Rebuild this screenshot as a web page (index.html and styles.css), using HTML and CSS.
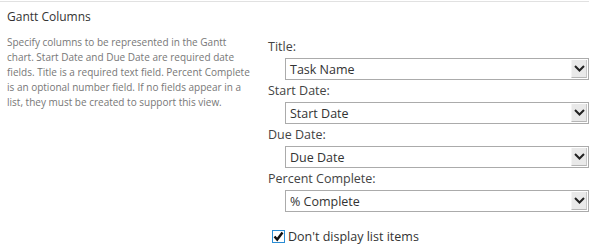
FILE: index.html
```html
<!DOCTYPE html>
<html lang="en">
<head>
    <meta charset="UTF-8">
    <title>Gantt Columns</title>
    <link rel="stylesheet" href="styles.css">
</head>
<body>
    <!-- Gantt columns section -->
    <div class="section">
        <div class="info">
            <h3 class="section-title">Gantt Columns</h3>
            <p class="section-desc">Specify columns to be represented in the Gantt chart. Start Date and Due Date are required date fields. Title is a required text field. Percent Complete is an optional number field. If no fields appear in a list, they must be created to support this view.</p>
        </div>

        <div class="fields">
            <div class="field">
                <label class="field-label">Title:</label>
                <div class="select"><span>Task Name</span><span class="select-arrow"><svg width="11" height="7" viewBox="0 0 11 7"><path d="M1 1 L5.5 5.5 L10 1" fill="none" stroke="#222" stroke-width="2"/></svg></span></div>
            </div>
            <div class="field">
                <label class="field-label">Start Date:</label>
                <div class="select"><span>Start Date</span><span class="select-arrow"><svg width="11" height="7" viewBox="0 0 11 7"><path d="M1 1 L5.5 5.5 L10 1" fill="none" stroke="#222" stroke-width="2"/></svg></span></div>
            </div>
            <div class="field">
                <label class="field-label">Due Date:</label>
                <div class="select"><span>Due Date</span><span class="select-arrow"><svg width="11" height="7" viewBox="0 0 11 7"><path d="M1 1 L5.5 5.5 L10 1" fill="none" stroke="#222" stroke-width="2"/></svg></span></div>
            </div>
            <div class="field">
                <label class="field-label">Percent Complete:</label>
                <div class="select"><span>% Complete</span><span class="select-arrow"><svg width="11" height="7" viewBox="0 0 11 7"><path d="M1 1 L5.5 5.5 L10 1" fill="none" stroke="#222" stroke-width="2"/></svg></span></div>
            </div>
            <div class="check-row">
                <span class="checkbox"><svg width="11" height="11" viewBox="0 0 11 11"><path d="M1.5 5.5 L4.2 8.5 L9.5 1.5" fill="none" stroke="#111" stroke-width="2.4"/></svg></span>
                <span>Don't display list items</span>
            </div>
        </div>
    </div>
</body>
</html>
```

FILE: styles.css
```css
body {
    margin: 0;
    background: #fff;
    font-family: 'Open Sans', 'Noto Sans', sans-serif;
    color: #444;
}

.section {
    display: flex;
    border-top: 1px solid #e1e1e1;
    margin: 1px 3px 0 0;
}

.info {
    width: 244px;
    padding-left: 7px;
}

.section-title {
    margin: 7px 0 0;
    font-size: 12px;
    font-weight: normal;
    color: #333;
    line-height: 16px;
}

.section-desc {
    margin: 10px 0 0;
    font-size: 10px;
    line-height: 15px;
    color: #777;
}

.fields {
    margin-left: 17px;
    padding-top: 34px;
    flex: 1;
}

.field-label {
    display: block;
    font-size: 12.5px;
    line-height: 22px;
    color: #444;
}

.select {
    display: flex;
    align-items: center;
    justify-content: space-between;
    margin-left: 17px;
    height: 20px;
    border: 1px solid #ababab;
    font-size: 12.5px;
    color: #333;
    padding-left: 4px;
}

.select-arrow {
    display: flex;
    align-items: center;
    justify-content: center;
    width: 16px;
    height: 18px;
    margin-right: 1px;
    background: #e9e9e9;
    border-left: 1px solid #f4f4f4;
    border-right: 1px solid #c8c8c8;
    border-bottom: 1px solid #b5b5b5;
    box-sizing: border-box;
}

.check-row {
    display: flex;
    align-items: center;
    gap: 3px;
    margin: 16px 0 0 4px;
    font-size: 12.5px;
    color: #333;
}

.checkbox {
    display: flex;
    align-items: center;
    justify-content: center;
    width: 11px;
    height: 11px;
    border: 1px solid #2a8dd4;
}
```
